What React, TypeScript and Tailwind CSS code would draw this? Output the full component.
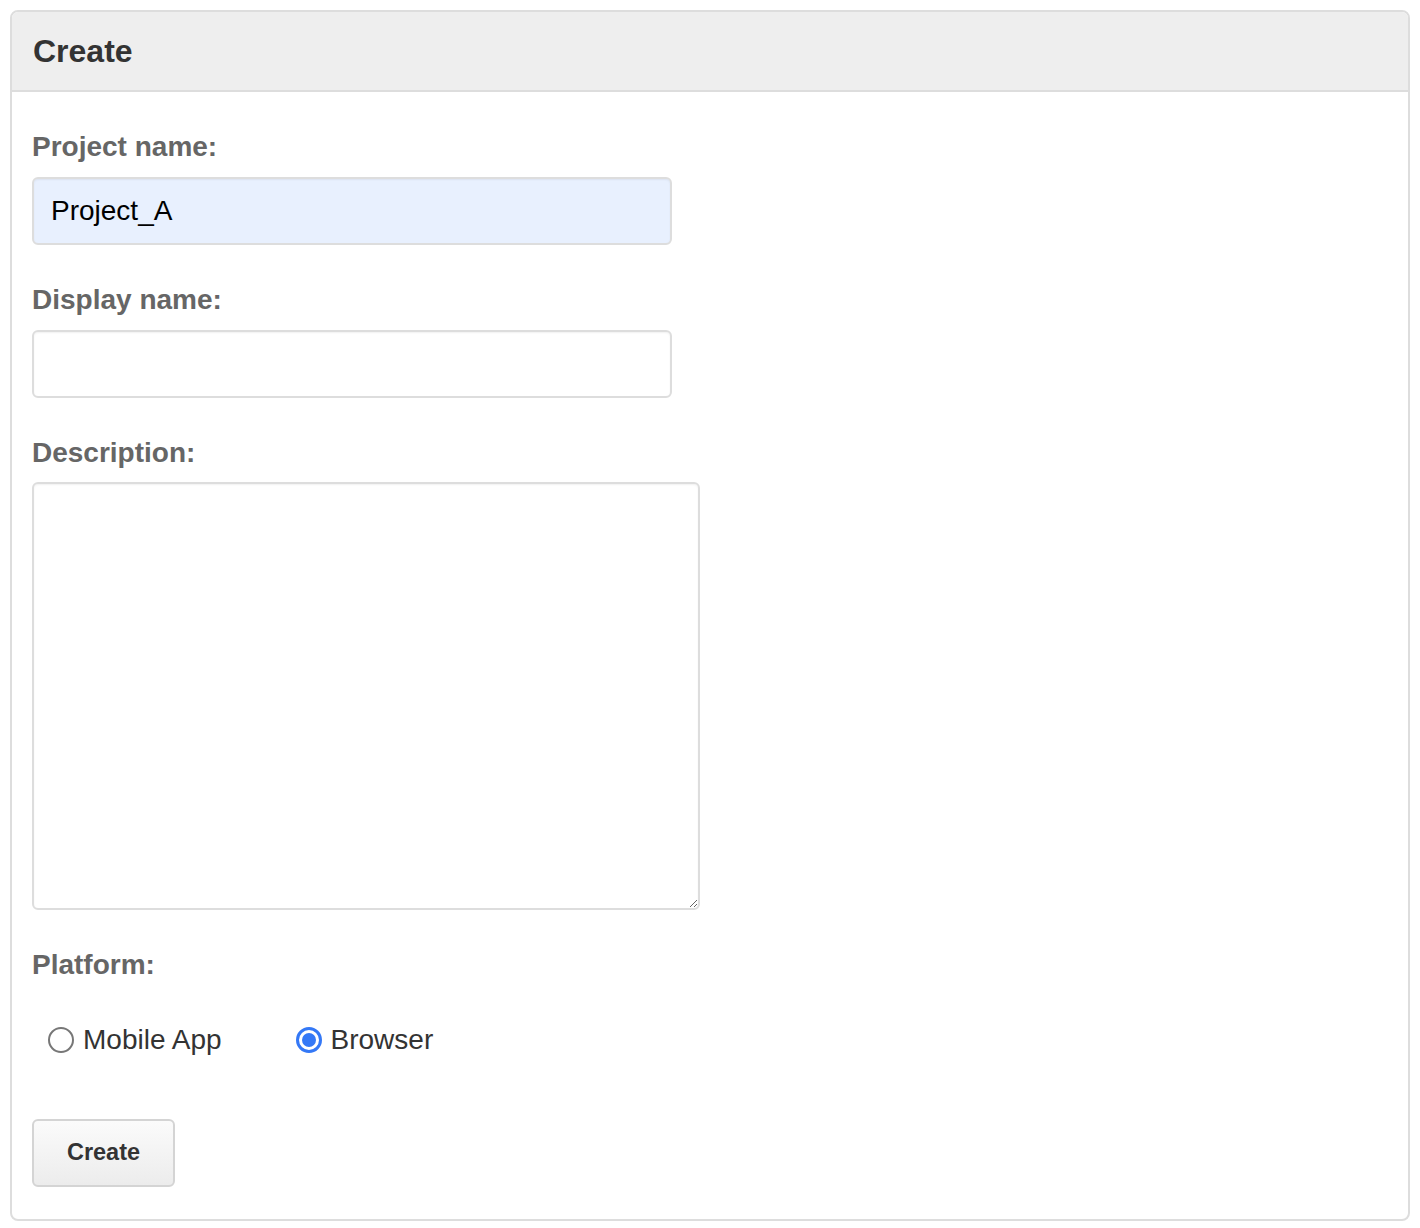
import React from "react";

function Radio({ checked, label }: { checked?: boolean; label: string }) {
  return (
    <label className="flex items-center gap-[9px] text-[28px] text-[#333]">
      {checked ? (
        <span className="flex h-[26px] w-[26px] items-center justify-center rounded-full border-[3px] border-[#3478f6] bg-white">
          <span className="h-[14px] w-[14px] rounded-full bg-[#3478f6]" />
        </span>
      ) : (
        <span className="h-[26px] w-[26px] rounded-full border-2 border-[#777] bg-white" />
      )}
      {label}
    </label>
  );
}

export default function App() {
  return (
    <div className="bg-white p-[10px] font-['Liberation_Sans',Arial,sans-serif]">
      <div className="overflow-hidden rounded-[8px] border-2 border-[#ddd]">
        {/* Header */}
        <div className="flex h-[80px] items-center border-b-2 border-[#ddd] bg-[#eee] pl-[21px]">
          <h1 className="text-[32px] font-bold text-[#333]">Create</h1>
        </div>

        {/* Form */}
        <div className="px-[20px] pb-[32px] pt-[37px]">
          <div className="text-[28px] font-bold leading-[36px] text-[#666]">Project name:</div>
          <input
            defaultValue="Project_A"
            className="mt-[12px] block h-[68px] w-[640px] rounded-[6px] border-2 border-[#ddd] bg-[#e8f0fe] px-[17px] text-[28px] text-black shadow-[inset_0_1px_2px_rgba(0,0,0,0.06)] outline-none"
          />

          <div className="mt-[37px] text-[28px] font-bold leading-[36px] text-[#666]">Display name:</div>
          <input className="mt-[12px] block h-[68px] w-[640px] rounded-[6px] border-2 border-[#ddd] bg-white px-[17px] text-[28px] shadow-[inset_0_1px_2px_rgba(0,0,0,0.06)] outline-none" />

          <div className="mt-[37px] text-[28px] font-bold leading-[36px] text-[#666]">Description:</div>
          <textarea className="mt-[11px] block h-[428px] w-[668px] rounded-[6px] border-2 border-[#ddd] bg-white p-[10px] text-[28px] shadow-[inset_0_1px_2px_rgba(0,0,0,0.06)] outline-none" />

          <div className="mt-[37px] text-[28px] font-bold leading-[36px] text-[#666]">Platform:</div>
          <div className="mt-[39px] flex h-[36px] items-center gap-[74px] pl-[16px]">
            <Radio label="Mobile App" />
            <Radio checked label="Browser" />
          </div>

          <button className="mt-[61px] flex h-[68px] w-[143px] items-center justify-center rounded-[6px] border-2 border-[#d4d4d4] bg-gradient-to-b from-[#fbfbfb] to-[#ececec] text-[23.5px] font-bold text-[#333]">
            Create
          </button>
        </div>
      </div>
    </div>
  );
}
